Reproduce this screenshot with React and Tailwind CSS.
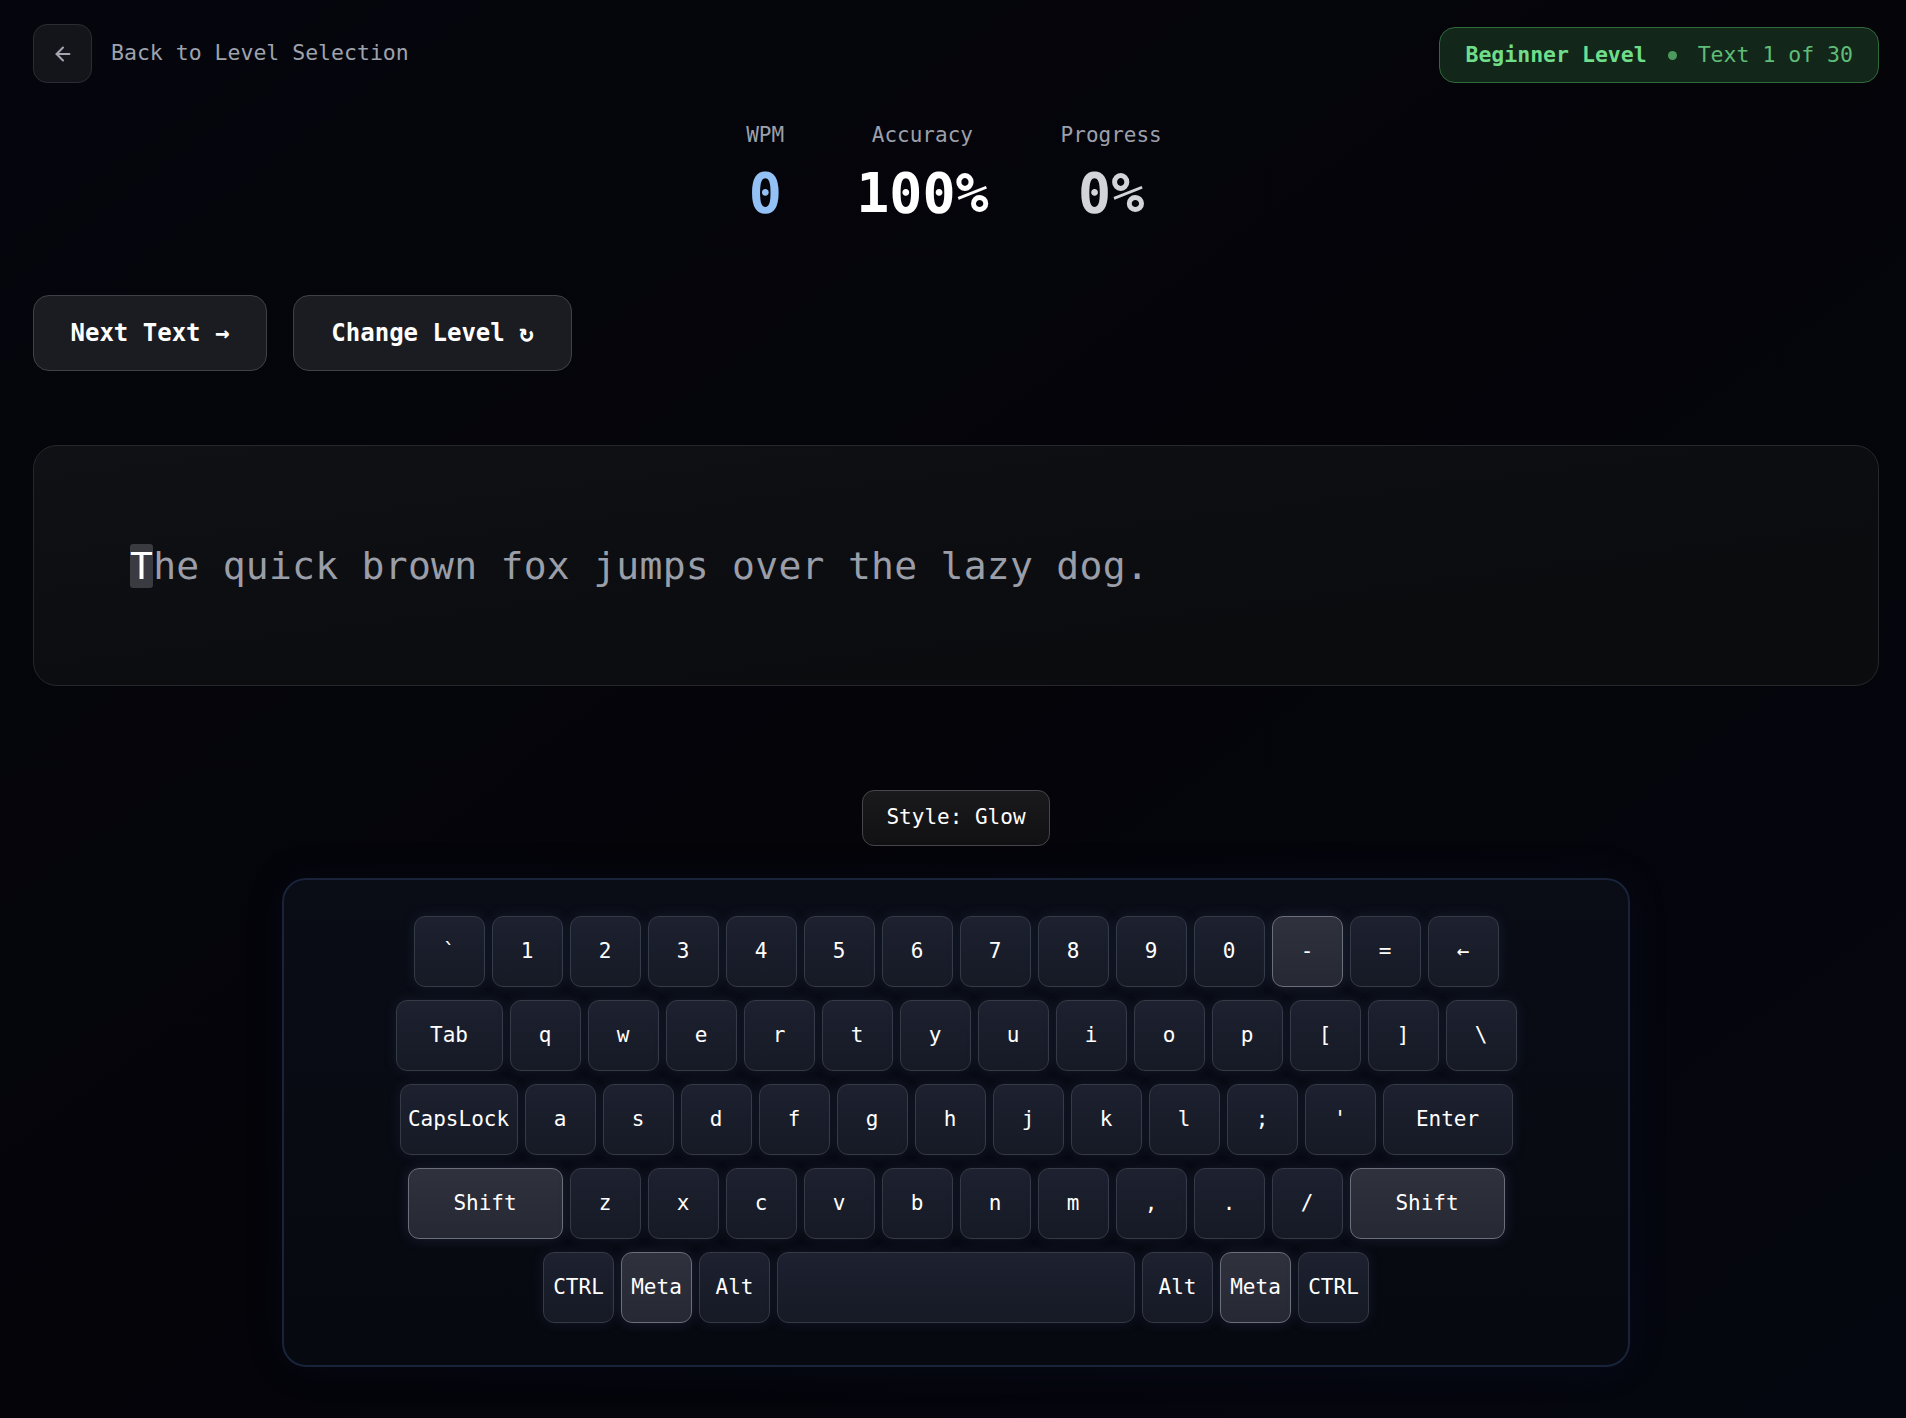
import React from "react";
import { ArrowLeft } from "lucide-react";

const MONO = { fontFamily: '"DejaVu Sans Mono", "Liberation Mono", monospace' };

const rows = [
  [["`"], ["1"], ["2"], ["3"], ["4"], ["5"], ["6"], ["7"], ["8"], ["9"], ["0"], ["-", 71, true], ["="], ["←"]],
  [["Tab", 107], ["q"], ["w"], ["e"], ["r"], ["t"], ["y"], ["u"], ["i"], ["o"], ["p"], ["["], ["]"], ["\\"]],
  [["CapsLock", 118], ["a"], ["s"], ["d"], ["f"], ["g"], ["h"], ["j"], ["k"], ["l"], [";"], ["'"], ["Enter", 130]],
  [["Shift", 155, true], ["z"], ["x"], ["c"], ["v"], ["b"], ["n"], ["m"], [","], ["."], ["/"], ["Shift", 155, true]],
  [["CTRL"], ["Meta", 71, true], ["Alt"], ["", 358], ["Alt"], ["Meta", 71, true], ["CTRL"]],
];

function Key({ label, w = 71, hl = false }) {
  return (
    <div
      style={{ width: w }}
      className={
        "h-[71px] shrink-0 flex items-center justify-center rounded-[11px] border text-[21px] text-white " +
        (hl
          ? "border-[#6b6f7b] bg-gradient-to-b from-[#2f323d] to-[#262934] shadow-[0_0_14px_rgba(120,140,200,0.18)]"
          : "border-[#353a47] bg-gradient-to-b from-[#1d2130] to-[#161a25] shadow-[0_0_14px_rgba(90,110,170,0.14)]")
      }
    >
      {label}
    </div>
  );
}

export default function App() {
  return (
    <div
      style={MONO}
      className="min-h-screen w-full bg-gradient-to-br from-[#05060d] via-[#040409] to-[#050710] pl-[33px] pr-[27px] pt-[24px] pb-[53px]"
    >
      {/* Header */}
      <div className="flex items-start justify-between">
        <div className="flex items-center gap-[19px]">
          <div className="flex h-[59px] w-[59px] items-center justify-center rounded-[14px] border border-[#2c2d34] bg-[#14151b]">
            <ArrowLeft size={22} strokeWidth={2.2} className="text-[#a3a6b0]" />
          </div>
          <span className="text-[21.5px] text-[#9ea2ad]">Back to Level Selection</span>
        </div>
        <div className="mt-[3px] flex h-[56px] items-center gap-[21px] rounded-[16px] border border-[#2f6a3b] bg-[#12261a] px-[25px] text-[21.5px]">
          <span className="font-bold text-[#6fdd8a]">Beginner Level</span>
          <span className="h-[9px] w-[9px] rounded-full bg-[#4c9a5d]" />
          <span className="text-[#5fbd77]">Text 1 of 30</span>
        </div>
      </div>

      {/* Stats */}
      <div className="mt-[38px] flex justify-center gap-[72px] pr-[4px]">
        <div className="flex flex-col items-center">
          <span className="text-[21px] leading-[28px] text-[#9ca0aa]">WPM</span>
          <span className="mt-[17px] text-[55px] font-bold leading-none text-[#93c0f5]">0</span>
        </div>
        <div className="flex flex-col items-center">
          <span className="text-[21px] leading-[28px] text-[#9ca0aa]">Accuracy</span>
          <span className="mt-[17px] text-[55px] font-bold leading-none text-white">100%</span>
        </div>
        <div className="flex flex-col items-center">
          <span className="text-[21px] leading-[28px] text-[#9ca0aa]">Progress</span>
          <span className="mt-[17px] text-[55px] font-bold leading-none text-[#d2d4d9]">0%</span>
        </div>
      </div>

      {/* Buttons */}
      <div className="mt-[74px] flex gap-[26px]">
        <button className="flex h-[76px] w-[234px] items-center justify-center rounded-[16px] border border-[#404148] bg-[#1b1c21] text-[24px] font-bold text-white">
          Next Text →
        </button>
        <button className="flex h-[76px] w-[279px] items-center justify-center rounded-[16px] border border-[#404148] bg-[#1b1c21] text-[24px] font-bold text-white">
          Change Level ↻
        </button>
      </div>

      {/* Text box */}
      <div className="mt-[74px] flex h-[241px] items-center rounded-[24px] border border-[#26272b] bg-gradient-to-br from-[#101114] via-[#0c0d10] to-[#0b0c0e] px-[96px]">
        <p className="text-[38px] leading-[46px] tracking-[0.28px] text-[#9a9ea8]">
          <span className="rounded-[3px] bg-[#3a3b41] text-white">T</span>he quick brown fox jumps over the lazy dog.
        </p>
      </div>

      {/* Style toggle */}
      <div className="mt-[104px] flex justify-center">
        <button className="flex h-[56px] w-[188px] items-center justify-center rounded-[12px] border border-[#47474b] bg-gradient-to-b from-[#1a1a1c] to-[#111113] text-[21px] text-white">
          Style: Glow
        </button>
      </div>

      {/* Keyboard */}
      <div className="mt-[32px] flex justify-center">
        <div className="flex w-[1348px] flex-col items-center gap-[13px] rounded-[24px] border-2 border-[#19233a] bg-gradient-to-b from-[#0a0d16] to-[#070910] pt-[36px] pb-[42px] shadow-[0_0_40px_rgba(30,50,100,0.12)]">
          {rows.map((row, i) => (
            <div key={i} className="flex gap-[7px]">
              {row.map(([label, w, hl], j) => (
                <Key key={j} label={label} w={w} hl={hl} />
              ))}
            </div>
          ))}
        </div>
      </div>
    </div>
  );
}
